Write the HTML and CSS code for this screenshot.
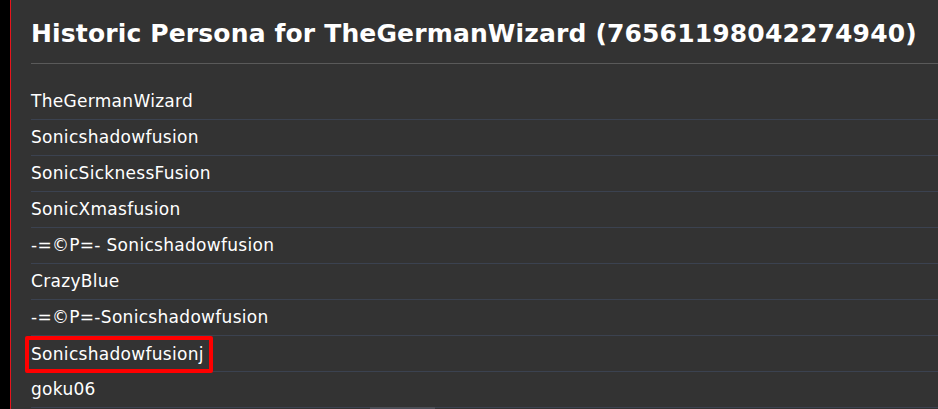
FILE: index.html
```html
<!DOCTYPE html>
<html lang="en">
<head>
<meta charset="utf-8">
<title>Historic Persona</title>
<link rel="stylesheet" href="styles.css">
</head>
<body>
<div class="side"></div>
<main class="panel">
  <h1 class="title">Historic Persona for TheGermanWizard (76561198042274940)</h1>
  <hr class="rule">
  <ul class="names">
    <li class="row">TheGermanWizard</li>
    <li class="row">Sonicshadowfusion</li>
    <li class="row">SonicSicknessFusion</li>
    <li class="row">SonicXmasfusion</li>
    <li class="row">-=©P=- Sonicshadowfusion</li>
    <li class="row">CrazyBlue</li>
    <li class="row">-=©P=-Sonicshadowfusion</li>
    <li class="row"><span class="mark">Sonicshadowfusionj</span></li>
    <li class="row">goku06</li>
  </ul>
  <div class="scroll"></div>
</main>
</body>
</html>
```
FILE: styles.css
```css
html, body {
  margin: 0;
  padding: 0;
  height: 100%;
  overflow: hidden;
}
body {
  display: flex;
  background: #000;
  font-family: "DejaVu Sans", Verdana, sans-serif;
  color: #fff;
}
.side {
  width: 10px;
  flex: none;
  background: #000;
  border-right: 1px solid #e8141c;
}
.panel {
  flex: 1;
  background: #333333;
  padding: 0 0 0 20px;
  position: relative;
}
.title {
  margin: 0;
  padding: 19px 0 0 0;
  font-size: 25px;
  letter-spacing: 0.15px;
  font-weight: bold;
  line-height: 30px;
  white-space: nowrap;
}
.rule {
  margin: 14px 0 0 0;
  border: 0;
  border-top: 1px solid #5a5a5a;
  height: 0;
}
.names {
  list-style: none;
  margin: 20px 0 0 0;
  padding: 0;
}
.row {
  height: 35px;
  line-height: 35px;
  border-bottom: 1px solid #3b4250;
  font-size: 17px;
  letter-spacing: 0.3px;
  white-space: nowrap;
}
.mark {
  display: inline-block;
  vertical-align: top;
  margin-left: -6px;
  padding: 0 5px 0 2px;
  line-height: 29px;
  border: 4px solid #ff0000;
  border-radius: 2px;
}
.scroll {
  position: absolute;
  left: 359px;
  bottom: 0;
  width: 65px;
  height: 2px;
  background: #4a4d55;
}
```
